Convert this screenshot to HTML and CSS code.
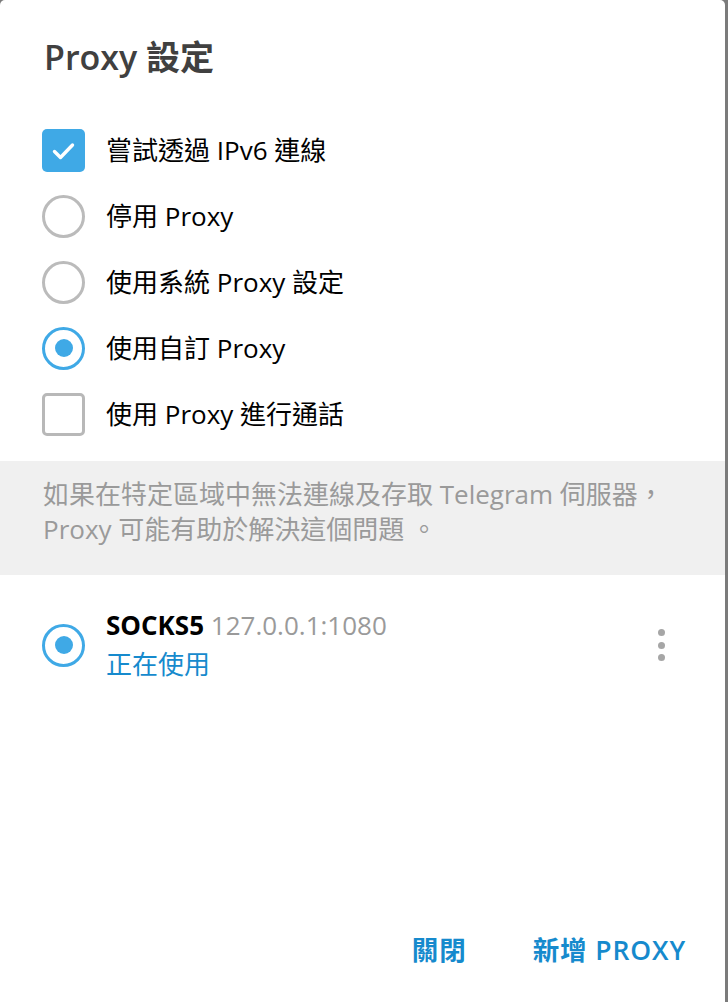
FILE: index.html
```html
<!DOCTYPE html>
<html lang="zh-Hant">
<head>
<meta charset="utf-8">
<title>Proxy 設定</title>
<link rel="stylesheet" href="styles.css">
</head>
<body>
<div class="dialog">
  <h1 class="title">Proxy 設定</h1>
  <div class="options">
    <div class="row">
      <span class="box box-checked">
        <svg viewBox="0 0 43 43" width="43" height="43"><path d="M12.5 22.5 L18.5 28.5 L30.5 16" fill="none" stroke="#fff" stroke-width="3.4" stroke-linecap="round" stroke-linejoin="round"/></svg>
      </span>
      <span class="label">嘗試透過 IPv6 連線</span>
    </div>
    <div class="row">
      <span class="radio"></span>
      <span class="label">停用 Proxy</span>
    </div>
    <div class="row">
      <span class="radio"></span>
      <span class="label">使用系統 Proxy 設定</span>
    </div>
    <div class="row">
      <span class="radio radio-on"><span class="dot"></span></span>
      <span class="label">使用自訂 Proxy</span>
    </div>
    <div class="row">
      <span class="box"></span>
      <span class="label">使用 Proxy 進行通話</span>
    </div>
  </div>
  <div class="note">如果在特定區域中無法連線及存取 Telegram 伺服器，<br>Proxy 可能有助於解決這個問題 。</div>
  <div class="proxy">
    <span class="radio radio-on"><span class="dot"></span></span>
    <div class="proxy-info">
      <div class="proxy-line"><span class="proto">SOCKS5</span> <span class="addr">127.0.0.1:1080</span></div>
      <div class="status">正在使用</div>
    </div>
    <div class="more"><span></span><span></span><span></span></div>
  </div>
  <div class="spacer"></div>
  <div class="buttons">
    <span class="btn">關閉</span>
    <span class="btn">新增 PROXY</span>
  </div>
</div>
</body>
</html>
```

FILE: styles.css
```css
html, body {
  margin: 0;
  padding: 0;
  background: #7b7b7b;
}
body {
  font-family: "Open Sans", "Noto Sans CJK TC", sans-serif;
  -webkit-font-smoothing: antialiased;
}
.dialog {
  width: 725px;
  min-height: 1002px;
  background: #fff;
  border-radius: 5px 5px 0 0;
  display: flex;
  flex-direction: column;
  box-sizing: border-box;
}
.title {
  margin: 0;
  padding: 37px 0 0 44px;
  font-size: 34px;
  line-height: 40px;
  font-weight: 600;
  color: #404040;
}
.options {
  margin-top: 40px;
  display: flex;
  flex-direction: column;
}
.row {
  height: 66px;
  display: flex;
  align-items: center;
  padding-left: 42px;
  gap: 21px;
}
.label {
  font-size: 26px;
  color: #000;
  line-height: 36px;
}
.box {
  width: 43px;
  height: 43px;
  box-sizing: border-box;
  border: 3px solid #b8b8b8;
  border-radius: 5px;
  flex: none;
  display: block;
}
.box-checked {
  border: none;
  background: #3fa9e6;
}
.box svg { display: block; }
.radio {
  width: 43px;
  height: 43px;
  box-sizing: border-box;
  border: 3px solid #bbbbbb;
  border-radius: 50%;
  flex: none;
  display: flex;
  align-items: center;
  justify-content: center;
}
.radio-on {
  border: 3.5px solid #3fa9e6;
}
.dot {
  width: 18px;
  height: 18px;
  border-radius: 50%;
  background: #3fa9e6;
}
.note {
  margin-top: 14px;
  background: #f0f0f0;
  padding: 16px 43px 28px;
  font-size: 26px;
  line-height: 35px;
  color: #9a9a9a;
}
.proxy {
  display: flex;
  align-items: center;
  padding: 31px 0 0 42px;
  gap: 21px;
}
.proxy-info {
  flex: 1;
  display: flex;
  flex-direction: column;
}
.proxy-line, .status {
  font-size: 26px;
  line-height: 39px;
}
.proto {
  font-weight: 700;
  color: #000;
}
.addr {
  color: #9a9a9a;
}
.status {
  color: #168acd;
}
.more {
  display: flex;
  flex-direction: column;
  gap: 5.5px;
  margin-right: 60px;
}
.more span {
  width: 7px;
  height: 7px;
  border-radius: 50%;
  background: #a6a6a6;
}
.spacer { flex: 1; }
.buttons {
  display: flex;
  justify-content: flex-end;
  gap: 66px;
  padding: 0 39px 32px 0;
}
.btn {
  font-size: 26.5px;
  line-height: 40px;
  font-weight: 600;
  letter-spacing: 0.9px;
  color: #168acd;
}
```
